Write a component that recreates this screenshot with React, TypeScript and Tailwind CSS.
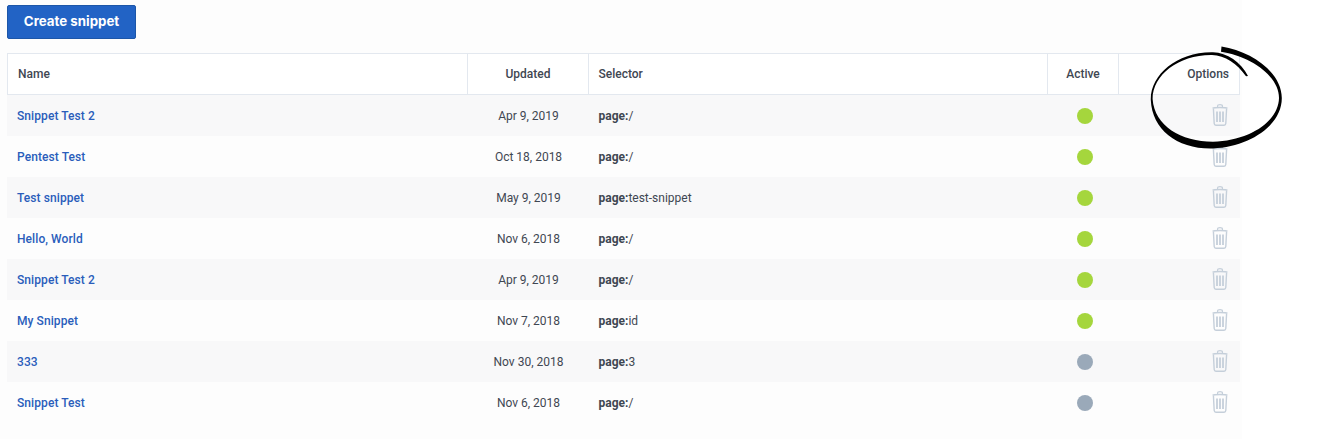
const rows = [
  ["Snippet Test 2", "Apr 9, 2019", "/", true],
  ["Pentest Test", "Oct 18, 2018", "/", true],
  ["Test snippet", "May 9, 2019", "test-snippet", true],
  ["Hello, World", "Nov 6, 2018", "/", true],
  ["Snippet Test 2", "Apr 9, 2019", "/", true],
  ["My Snippet", "Nov 7, 2018", "id", true],
  ["333", "Nov 30, 2018", "3", false],
  ["Snippet Test", "Nov 6, 2018", "/", false],
] as const;

function Trash() {
  return (
    <svg width="16" height="22" viewBox="0 0 16 22" fill="none" stroke="#c5cfda" strokeWidth="1.2">
      <path d="M5.6 3V1.9C5.6 1.2 6.2.7 8 .7s2.4.5 2.4 1.2V3" />
      <path d="M.6 4.2C2 3.2 14 3.2 15.4 4.2" strokeWidth="1.4" />
      <path d="M1.4 4.5l.8 15c.1 1 .7 1.7 1.7 1.7h8.2c1 0 1.6-.7 1.7-1.7l.8-15" strokeWidth="1.4" />
      <path d="M5 7.5v10.5M8 7.5v10.5M11 7.5v10.5" strokeWidth="1.8" />
    </svg>
  );
}

function Circle() {
  return (
    <svg className="absolute left-[1145px] top-[42px]" width="142" height="110" viewBox="0 0 142 110">
      <path
        fill="#000"
        d="M76.5 4.5C106 9 136.5 30 136.8 56C137 83 105 105 68 106.5C33 107.5 7 88 5.8 58C5 33 32 9.5 68 10.2C82 10.8 96 20 103 34L101 34.2C92 21.5 80 13.4 67 13C34 12.5 7.5 33 7.6 57C9.5 84 36 99.5 68 99.8C104 98.5 133.5 80 134 56C134 34 106 14.5 76 9.8Z"
      />
    </svg>
  );
}

const cellBorder = "border-t border-b border-r border-[#e3e8ef] font-medium";

export default function App() {
  return (
    <div className="relative h-[439px] w-[1319px] overflow-hidden bg-white font-['Roboto',sans-serif] text-[12px] text-[#3f4752]">
      <div className="h-full w-[1242px] bg-[#fdfdfd] pl-[7px] pt-[5px]">
        <button className="h-[34px] w-[129px] rounded-[2px] border border-[#1c56a8] bg-[#2263c5] font-['Inter',sans-serif] text-[13.3px] font-bold text-white">
          Create snippet
        </button>
        <table className="mt-[14px] w-[1233px] table-fixed border-separate border-spacing-0">
          <colgroup>
            <col className="w-[461px]" />
            <col className="w-[121px]" />
            <col className="w-[459px]" />
            <col className="w-[71px]" />
            <col className="w-[121px]" />
          </colgroup>
          <thead>
            <tr className="bg-white">
              <th className={`h-[42px] border-l pl-[10px] pb-[1px] text-left ${cellBorder}`}>Name</th>
              <th className={`pb-[1px] text-center ${cellBorder}`}>Updated</th>
              <th className={`pl-[9.5px] pb-[1px] text-left ${cellBorder}`}>Selector</th>
              <th className={`pb-[1px] text-center ${cellBorder}`}>Active</th>
              <th className={`pr-[10px] pb-[1px] text-right ${cellBorder}`}>Options</th>
            </tr>
          </thead>
          <tbody>
            {rows.map(([name, date, sel, active], i) => (
              <tr key={i} className={i % 2 === 0 ? "bg-[#f8f8f9]" : "bg-[#fdfdfd]"}>
                <td className="h-[41px] pl-[10px] font-medium tracking-[0.08px] text-[#2a5dbb]">{name}</td>
                <td className="text-center">{date}</td>
                <td className="pl-[9.5px]">
                  <span className="font-bold">page:</span>
                  {sel}
                </td>
                <td className="pl-[2px]">
                  <div className={active ? "mx-auto h-4 w-4 rounded-full bg-[#a5d63d]" : "mx-auto h-4 w-4 rounded-full bg-[#9aa9b9]"} />
                </td>
                <td>
                  <div className="mb-[2px] flex justify-end pr-[12px]">
                    <Trash />
                  </div>
                </td>
              </tr>
            ))}
          </tbody>
        </table>
      </div>
      <Circle />
    </div>
  );
}
